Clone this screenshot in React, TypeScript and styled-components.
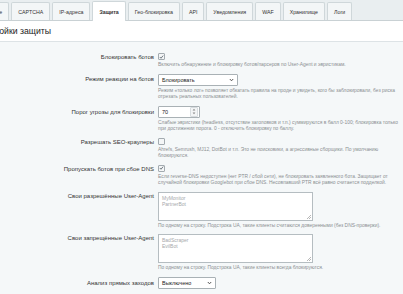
import React from "react";
import styled, { createGlobalStyle } from "styled-components";

const GlobalStyle = createGlobalStyle`
	html, body {
		margin: 0;
		padding: 0;
		overflow: hidden;
		background: #f5f8f9;
	}
	body {
		font-family: "Liberation Sans", Arial, sans-serif;
		color: #333;
	}
`;

const tabs = ["Общие", "CAPTCHA", "IP-адреса", "Защита", "Гео-блокировка", "API", "Уведомления", "WAF", "Хранилище", "Логи"];

const Check: React.FC<{ checked?: boolean }> = ({ checked }) => (
	<CheckBox>
		{checked && (
			<svg width="6" height="6" viewBox="0 0 6 6">
				<polyline points="1,3 2.4,4.5 5,1.3" fill="none" stroke="#55606a" strokeWidth="1" />
			</svg>
		)}
	</CheckBox>
);

const Chevron: React.FC = () => (
	<svg width="5" height="4" viewBox="0 0 5 4">
		<polyline points="0.8,1 2.5,2.8 4.2,1" fill="none" stroke="#444" strokeWidth="0.9" />
	</svg>
);

const Grip: React.FC = () => (
	<GripIcon width="5" height="5" viewBox="0 0 5 5">
		<line x1="1" y1="5" x2="5" y2="1" stroke="#888" strokeWidth="0.6" />
		<line x1="3" y1="5" x2="5" y2="3" stroke="#888" strokeWidth="0.6" />
	</GripIcon>
);

const App: React.FC = () => {
	return (
		<Page>
			<GlobalStyle />
			<TabBar>
				{tabs.map((t) => (
					<Tab key={t} $active={t === "Защита"}>{t}</Tab>
				))}
			</TabBar>
			<Header>Настройки защиты</Header>
			<Form>
				<Label>Блокировать ботов</Label>
				<Field>
					<Check checked />
					<Hint>Включить обнаружение и блокировку ботов/парсеров по User-Agent и эвристикам.</Hint>
				</Field>

				<Label $offset={1}>Режим реакции на ботов</Label>
				<Field>
					<Select $width={80}>
						<span>Блокировать</span>
						<Chevron />
					</Select>
					<Hint>Режим «только лог» позволяет обкатать правила на проде и увидеть, кого бы заблокировали, без риска отрезать реальных пользователей.</Hint>
				</Field>

				<Label $offset={2}>Порог угрозы для блокировки</Label>
				<Field>
					<NumberInput>
						<span>70</span>
						<Spinner>
							<svg width="4" height="7" viewBox="0 0 4 7">
								<polygon points="2,0.8 3.4,2.6 0.6,2.6" fill="#888" />
								<polygon points="2,6.2 3.4,4.4 0.6,4.4" fill="#888" />
							</svg>
						</Spinner>
					</NumberInput>
					<Hint>Слабые эвристики (headless, отсутствие заголовков и т.п.) суммируются в балл 0-100; блокировка только при достижении порога. 0 - отключить блокировку по баллу.</Hint>
				</Field>

				<Label>Разрешать SEO-краулеры</Label>
				<Field>
					<Check />
					<Hint>Ahrefs, Semrush, MJ12, DotBot и т.п. Это не поисковики, а агрессивные сборщики. По умолчанию блокируются.</Hint>
				</Field>

				<Label>Пропускать ботов при сбое DNS</Label>
				<Field>
					<Check checked />
					<Hint>Если reverse-DNS недоступен (нет PTR / сбой сети), не блокировать заявленного бота. Защищает от случайной блокировки Googlebot при сбое DNS. Несовпавший PTR всё равно считается подделкой.</Hint>
				</Field>

				<Label>Свои разрешённые User-Agent</Label>
				<Field>
					<TextArea>
						<div>MyMonitor</div>
						<div>PartnerBot</div>
						<Grip />
					</TextArea>
					<Hint>По одному на строку. Подстрока UA, такие клиенты считаются доверенными (без DNS-проверки).</Hint>
				</Field>

				<Label>Свои запрещённые User-Agent</Label>
				<Field>
					<TextArea>
						<div>BadScraper</div>
						<div>EvilBot</div>
						<Grip />
					</TextArea>
					<Hint>По одному на строку. Подстрока UA, такие клиенты всегда блокируются.</Hint>
				</Field>

				<Label $offset={2}>Анализ прямых заходов</Label>
				<Field>
					<Select $width={58}>
						<span>Выключено</span>
						<Chevron />
					</Select>
				</Field>
			</Form>
		</Page>
	);
};

const Page = styled.div`
	margin-left: -26px;
	width: calc(100% + 26px);
	min-height: 294px;
	background: #f5f8f9;
`;
const TabBar = styled.div`
	display: flex;
	align-items: flex-end;
	gap: 2px;
	height: 20px;
	padding-left: 4px;
	background: #e9eef0;
	border-bottom: 1px solid #c9d1d4;
`;
const Tab = styled.div<{ $active?: boolean }>`
	display: flex;
	align-items: center;
	height: ${(p) => (p.$active ? "19px" : "17px")};
	margin-bottom: ${(p) => (p.$active ? "-1px" : "0")};
	padding: 0 6px;
	font-size: 5.25px;
	color: #333;
	font-weight: ${(p) => (p.$active ? 700 : 400)};
	background: ${(p) => (p.$active ? "#ffffff" : "#f3f6f7")};
	border: 1px solid #cfd7da;
	border-bottom: none;
	border-radius: 2px 2px 0 0;
	white-space: nowrap;
`;
const Header = styled.div`
	height: 20px;
	padding-left: 1px;
	display: flex;
	align-items: center;
	font-size: 8.7px;
	color: #222;
	background: #ffffff;
	border-bottom: 1px solid #dde3e6;
`;
const Form = styled.div`
	display: grid;
	grid-template-columns: 184px 1fr;
	row-gap: 5px;
	padding-top: 11px;
`;
const Label = styled.div<{ $offset?: number }>`
	text-align: right;
	padding-right: 4px;
	padding-top: ${(p) => p.$offset ?? 0}px;
	font-size: 6px;
	line-height: 8px;
	color: #333;
	white-space: nowrap;
`;
const Field = styled.div`
	display: flex;
	flex-direction: column;
	align-items: flex-start;
	max-width: 247px;
`;
const CheckBox = styled.span`
	display: flex;
	align-items: center;
	justify-content: center;
	width: 7px;
	height: 7px;
	box-sizing: border-box;
	border: 1px solid #a3abb0;
	border-radius: 1px;
	background: #f4f6f7;
`;
const Hint = styled.div`
	margin-top: 2px;
	font-size: 4.9px;
	line-height: 6.5px;
	color: #8b8f92;
`;
const Select = styled.div<{ $width: number }>`
	display: flex;
	align-items: center;
	justify-content: space-between;
	box-sizing: border-box;
	width: ${(p) => p.$width}px;
	height: 12px;
	padding: 0 3px;
	border: 1px solid #a9b1b5;
	border-radius: 1px;
	background: #ffffff;
	font-size: 5.5px;
	color: #222;
`;
const NumberInput = styled.div`
	display: flex;
	align-items: center;
	justify-content: space-between;
	box-sizing: border-box;
	width: 42px;
	height: 12px;
	padding: 0 1px 0 3px;
	border: 1px solid #a9b1b5;
	border-radius: 1px;
	background: #ffffff;
	font-size: 5.5px;
	color: #222;
`;
const Spinner = styled.span`
	display: flex;
	align-items: center;
	justify-content: center;
	width: 6px;
	height: 8px;
	border: 1px solid #d7dcdf;
	border-radius: 1px;
	background: #f3f5f6;
`;
const TextArea = styled.div`
	position: relative;
	box-sizing: border-box;
	width: 155px;
	height: 29px;
	padding: 2px 3px;
	border: 1px solid #b5bdc1;
	background: #ffffff;
	font-size: 5px;
	line-height: 6px;
	color: #a6a9ab;
`;
const GripIcon = styled.svg`
	position: absolute;
	right: 1px;
	bottom: 1px;
`;

export default App;
